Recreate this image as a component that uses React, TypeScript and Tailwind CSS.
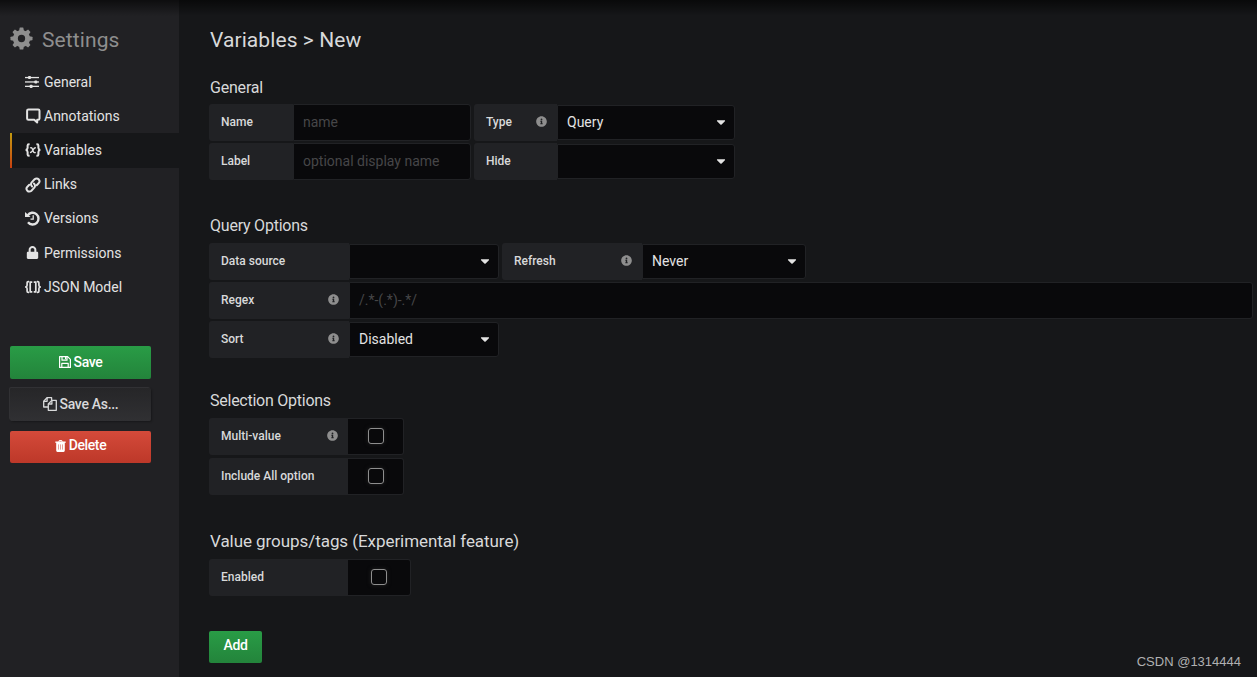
import React from 'react';
import { FaCaretDown, FaInfoCircle, FaLock } from 'react-icons/fa';

const teeth = [0, 45, 90, 135, 180, 225, 270, 315];

const GearIcon = () => (
  <svg className="w-[23px] h-[23px] mr-[9px] mb-[3px]" viewBox="0 0 24 24" fill="currentColor">
    {teeth.map((angle) => (
      <path key={angle} d="M9.3 5 10.1.9Q10.2.5 10.6.5h2.8q.4 0 .5.4l.8 4.1z" transform={`rotate(${angle} 12 12)`} />
    ))}
    <circle cx="12" cy="12" r="6.4" fill="none" stroke="currentColor" strokeWidth="5.2" />
  </svg>
);

const SlidersIcon = () => (
  <svg className="w-3.5 h-3.5" viewBox="0 0 14 14" fill="currentColor">
    <rect x="0" y="1.9" width="14" height="1.3" />
    <rect x="0" y="6.3" width="14" height="1.3" />
    <rect x="0" y="10.7" width="14" height="1.3" />
    <rect x="3" y="1" width="3" height="3.1" rx="1" />
    <rect x="9.3" y="5.4" width="3" height="3.1" rx="1" />
    <rect x="4.6" y="9.8" width="3" height="3.1" rx="1" />
  </svg>
);

const CommentIcon = () => (
  <svg className="w-4 h-4 -mr-px" viewBox="0 0 16 16" fill="none" stroke="currentColor" strokeWidth="2" strokeLinejoin="round">
    <path d="M3.4 1.4h9.8c.8 0 1.3.5 1.3 1.3v7.8c0 .8-.5 1.3-1.3 1.3h-1v2.8l-3-2.8H3.4c-.8 0-1.3-.5-1.3-1.3V2.7c0-.8.5-1.3 1.3-1.3z" />
  </svg>
);

const VariableIcon = () => (
  <svg className="w-4 h-4" viewBox="0 0 16 16" fill="none" stroke="currentColor" strokeWidth="2">
    <path d="M4.6 2.2h-.7c-1 0-1.3.5-1.3 1.3v2.6c0 1-.5 1.6-1.8 1.9 1.3.3 1.8.9 1.8 1.9v2.6c0 .8.3 1.3 1.3 1.3h.7M11.4 2.2h.7c1 0 1.3.5 1.3 1.3v2.6c0 1 .5 1.6 1.8 1.9-1.3.3-1.8.9-1.8 1.9v2.6c0 .8-.3 1.3-1.3 1.3h-.7" />
    <path strokeWidth="1.4" d="M5.1 6c1.3-.8 2 .1 2.4 1.2l.9 2.3c.5 1.2 1.2 1.5 2.3.8M10.8 5.8c-1.6-.3-2.2 1.2-2.9 2.4-.7 1.3-1.5 2.5-2.9 2.2" />
  </svg>
);

const LinkIcon = () => (
  <svg className="w-4 h-4" viewBox="0 0 16 16" fill="none" stroke="currentColor" strokeWidth="2" strokeLinecap="round">
    <path d="M7.1 9.5C5.5 8 5.7 6.3 6.9 5.1l2.7-2.8c1.3-1.2 2.9-1.2 4 0s1.2 2.8 0 4l-1.9 1.9" />
    <path d="M8.9 6.5c1.6 1.5 1.4 3.2.2 4.4l-2.7 2.8c-1.3 1.2-2.9 1.2-4 0s-1.2-2.8 0-4l1.9-1.9" />
  </svg>
);

const HistoryIcon = () => (
  <svg className="w-[15px] h-[15px]" viewBox="0 0 15 15" fill="none" stroke="currentColor">
    <path strokeWidth="2.4" d="M2.7 4.3A5.9 5.9 0 1 1 3 11.3" />
    <path fill="currentColor" stroke="none" d="M0 .9v5.2h5.6z" />
    <path strokeWidth="1.3" d="M8.2 4.2v4H5.5" />
  </svg>
);

const JsonIcon = () => (
  <svg className="w-4 h-4" viewBox="0 0 16 16" fill="none" stroke="currentColor" strokeWidth="1.7">
    <path d="M4 2.6h-.7c-.8 0-1.2.4-1.2 1.2v2.5c0 .9-.4 1.4-1.3 1.7.9.3 1.3.8 1.3 1.7v2.5c0 .8.4 1.2 1.2 1.2H4M12 2.6h.7c.8 0 1.2.4 1.2 1.2v2.5c0 .9.4 1.4 1.3 1.7-.9.3-1.3.8-1.3 1.7v2.5c0 .8-.4 1.2-1.2 1.2H12" />
    <path d="M7.3 3.2H5.2v9.6h2.1M8.7 3.2h2.1v9.6H8.7" />
  </svg>
);

const SaveIcon = () => (
  <svg className="w-3 h-3" viewBox="0 0 12 12" fill="none" stroke="currentColor" strokeWidth="1.2" strokeLinejoin="round">
    <path d="M.6.6h8l2.8 2.8v8H.6z" />
    <path d="M3 .8v3.4h5V.8M2.8 11.2V7.3h6.4v3.9" />
    <path d="M6.6 1v2.2" />
  </svg>
);

const CopyIcon = () => (
  <svg className="w-3.5 h-3.5" viewBox="0 0 14 14" fill="none" stroke="currentColor" strokeWidth="1.3" strokeLinejoin="round">
    <path d="M5.2 10H.7V4.2L4 .7h4.6v2.6" />
    <path d="M4.1.8v3.5H.8" />
    <path d="M8.8 3.4h4.5v9.9h-8V7z" />
    <path d="M8.9 3.5V7H5.5" />
  </svg>
);

const TrashIcon = () => (
  <svg className="w-[11px] h-3" viewBox="0 0 11 12">
    <path fill="currentColor" d="M3.4 1.5 3.9.4Q4.1 0 4.6 0h1.8q.5 0 .7.4l.5 1.1h2.9q.3 0 .3.4v.5q0 .3-.3.3h-.7v7.9q0 1.4-1.2 1.4H2.4q-1.2 0-1.2-1.4V2.7H.5Q.2 2.7.2 2.4v-.5q0-.4.3-.4z" />
    <path stroke="#cc4135" strokeWidth=".5" d="M3.5 4.4v5.2M5.5 4.4v5.2M7.5 4.4v5.2M4.4 1.4h2.2" />
  </svg>
);

const InfoIcon = () => <FaInfoCircle className="w-[11px] h-[11px] text-[#8e8e8e]" />;

const navItems = [
  { label: 'General', icon: <SlidersIcon /> },
  { label: 'Annotations', icon: <CommentIcon /> },
  { label: 'Variables', icon: <VariableIcon />, active: true },
  { label: 'Links', icon: <LinkIcon /> },
  { label: 'Versions', icon: <HistoryIcon /> },
  { label: 'Permissions', icon: <FaLock className="w-[15px] h-[13px] mb-0.5" /> },
  { label: 'JSON Model', icon: <JsonIcon /> },
];

type FieldProps = { width: string; children?: React.ReactNode };

const Label: React.FC<FieldProps & { info?: boolean }> = ({ width, info, children }) => (
  <div className={`${width} h-[37px] shrink-0 flex items-center justify-between rounded-l-[3px] bg-[#212225] pl-3 pr-2.5 pb-[3px] text-[12px] font-medium text-[#d8d9da]`}>
    <span className="pt-px">{children}</span>
    {info && <InfoIcon />}
  </div>
);

const Input: React.FC<{ width: string; placeholder: string }> = ({ width, placeholder }) => (
  <input
    className={`${width} h-[37px] rounded-r-[3px] border border-[#212225] bg-[#09090b] px-[9px] pb-0.5 text-[14px] text-[#d8d9da] placeholder:text-[#464648] placeholder:opacity-100 outline-none`}
    placeholder={placeholder}
  />
);

const Select: React.FC<FieldProps> = ({ width, children }) => (
  <div className={`${width} h-[35px] mt-px shrink-0 flex items-center justify-between rounded-r-[3px] border border-[#212225] bg-[#09090b] pl-[9px] pr-2 text-[14px] text-[#e3e3e3]`}>
    <span>{children}</span>
    <FaCaretDown className="w-2.5 h-3.5 mb-px" />
  </div>
);

const Checkbox: React.FC<{ width: string }> = ({ width }) => (
  <div className={`${width} h-[37px] flex items-center justify-center rounded-r-[3px] border border-l-0 border-[#212225] bg-[#09090b] pb-0.5`}>
    <span className="w-4 h-4 rounded-[3px] border-[1.5px] border-[#8e8e8e] shadow-[0_0_4px_#222]" />
  </div>
);

const Heading: React.FC<{ className?: string; children: React.ReactNode }> = ({ className = 'text-[16px]', children }) => (
  <h5 className={`h-[34px] pl-px leading-5 text-[#d8d9da] ${className}`}>{children}</h5>
);

const App: React.FC = () => {
  return (
    <div className="relative flex w-full h-[677px] overflow-hidden bg-[#161719] font-['Roboto',sans-serif]">
      {/* Sidebar */}
      <aside className="w-[179px] shrink-0 bg-[#212124] pt-[25px]">
        <h2 className="flex items-center h-[30px] pl-2.5 text-[21px] tracking-[0.1px] text-[#8e8e8e]">
          <GearIcon />
          <span className="pt-px">Settings</span>
        </h2>

        <nav className="mt-2.5 ml-2.5">
          {navItems.map((item) => (
            <a
              key={item.label}
              className={`relative flex items-center h-[34.2px] pl-[15px] text-[14px] text-[#e3e3e3] ${item.active ? 'bg-[#161719]' : ''}`}
            >
              {item.active && <span className="absolute left-0 inset-y-0 w-0.5 bg-gradient-to-b from-[#c29a10] to-[#c63d10]" />}
              <span className="w-[19px] flex items-center">{item.icon}</span>
              {item.label}
            </a>
          ))}
        </nav>

        {/* Actions */}
        <div className="mt-[42px] ml-2.5 w-[141px] text-[14px] font-medium text-white">
          <button className="w-full h-[33px] flex items-center justify-center gap-[3px] rounded-xs bg-gradient-to-b from-[#299c46] to-[#23843b] pb-px tracking-[-0.35px]">
            <SaveIcon />
            Save
          </button>
          <button className="w-full h-[33px] mt-[9px] flex items-center justify-center gap-[3px] rounded-xs bg-gradient-to-b from-[#262628] to-[#303033] pb-px tracking-[-0.3px] text-[#d8d9da] shadow-[-1px_-1px_0_0_rgba(255,255,255,0.08),1px_1px_2px_0_rgba(0,0,0,0.3)]">
            <CopyIcon />
            Save As...
          </button>
          <button className="w-full h-8 mt-2.5 flex items-center justify-center gap-[3px] rounded-xs bg-gradient-to-b from-[#d44a3a] to-[#bd3829] pb-[3px] tracking-[-0.4px]">
            <TrashIcon />
            Delete
          </button>
        </div>
      </aside>

      {/* Edit form */}
      <main className="flex-1 min-w-0 pt-[25px] pl-[30px] pr-1">
        <h3 className="h-[45px] pl-px text-[21px] leading-[30px] tracking-[0.08px] text-[#d8d9da]">Variables &gt; New</h3>

        <section className="h-[139px]">
          <Heading className="pt-2 text-[16px] tracking-[-0.2px]">General</Heading>
          <div className="flex flex-col gap-0.5">
            <div className="flex gap-[3px]">
              <div className="flex">
                <Label width="w-[84px]">Name</Label>
                <Input width="w-[178px]" placeholder="name" />
              </div>
              <div className="flex">
                <Label width="w-[83px]" info>Type</Label>
                <Select width="w-[178px]">Query</Select>
              </div>
            </div>
            <div className="flex gap-[3px]">
              <div className="flex">
                <Label width="w-[84px]">Label</Label>
                <Input width="w-[178px]" placeholder="optional display name" />
              </div>
              <div className="flex">
                <Label width="w-[83px]">Hide</Label>
                <Select width="w-[178px]" />
              </div>
            </div>
          </div>
        </section>

        <section className="h-[175px]">
          <Heading className="pt-[7px] text-[16px] tracking-[-0.22px]">Query Options</Heading>
          <div className="flex flex-col gap-0.5">
            <div className="flex gap-[3px]">
              <div className="flex">
                <Label width="w-[140px]">Data source</Label>
                <Select width="w-[150px]" />
              </div>
              <div className="flex">
                <Label width="w-[140px]" info>Refresh</Label>
                <Select width="w-[164px]">Never</Select>
              </div>
            </div>
            <div className="flex">
              <Label width="w-[140px]" info>Regex</Label>
              <Input width="flex-1" placeholder="/.*-(.*)-.*/" />
            </div>
            <div className="flex">
              <Label width="w-[140px]" info>Sort</Label>
              <Select width="w-[150px]">Disabled</Select>
            </div>
          </div>
        </section>

        <section className="h-[141px]">
          <Heading className="pt-[7px] text-[16px] tracking-[-0.25px]">Selection Options</Heading>
          <div className="flex flex-col gap-[3px]">
            <div className="flex">
              <Label width="w-[139px]" info>Multi-value</Label>
              <Checkbox width="w-14" />
            </div>
            <div className="flex">
              <Label width="w-[139px]">Include All option</Label>
              <Checkbox width="w-14" />
            </div>
          </div>
        </section>

        <section className="h-[106px]">
          <Heading className="pt-1.5 text-[17px] tracking-[-0.06px]">Value groups/tags (Experimental feature)</Heading>
          <div className="flex">
            <Label width="w-[139px]">Enabled</Label>
            <Checkbox width="w-[63px]" />
          </div>
        </section>

        <button className="w-[53px] h-8 rounded-xs bg-gradient-to-b from-[#299c46] to-[#23843b] pb-[3px] text-[14px] font-medium tracking-[-0.3px] text-white">
          Add
        </button>
      </main>

      {/* Top shade */}
      <div className="absolute inset-x-0 top-0 h-4 bg-gradient-to-b from-black/60 to-transparent" />

      <span className="absolute right-4 bottom-[7px] font-['Liberation_Sans',sans-serif] text-[13px] leading-4 text-[#b0b0b1]">
        CSDN @1314444
      </span>
    </div>
  );
};

export default App;
